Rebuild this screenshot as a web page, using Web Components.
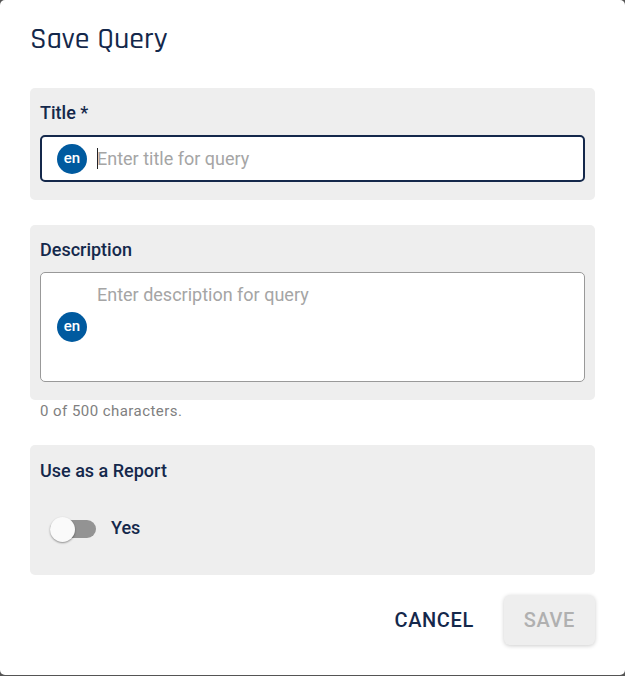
<!DOCTYPE html>
<html lang="en">
<head>
<meta charset="utf-8">
<title>Save Query</title>
<style>
  html { background: #555; }
  body { margin: 0; font-family: Roboto, "Liberation Sans", sans-serif; color: #14284b; }
</style>
</head>
<body>
<query-dialog></query-dialog>
<script>
class ShadowElement extends HTMLElement {
  constructor() {
    super();
    this.attachShadow({ mode: "open" }).innerHTML = this.template();
  }
}

customElements.define("lang-badge", class extends ShadowElement {
  template() {
    return `<style>
      :host { display: flex; align-items: center; justify-content: center; flex: none;
        width: 30px; height: 30px; border-radius: 50%; background: #005a9f; color: #fff;
        font-size: 15px; line-height: 28px; font-weight: 500; }
      span { height: 30px; }
    </style><span><slot></slot></span>`;
  }
});

customElements.define("form-section", class extends ShadowElement {
  template() {
    return `<style>
      :host { display: block; background: #eee; border-radius: 5px; padding: 10px 10px 18px; }
    </style><slot></slot>`;
  }
});

const fieldStyle = `
  :host { display: block; }
  label { display: block; font-size: 18px; line-height: 30px; font-weight: 480; margin-bottom: 7px; }
  .box { display: flex; align-items: center; box-sizing: border-box; gap: 10px;
    background: #fff; border-radius: 5px; }
  input, textarea { flex: 1; min-width: 0; box-sizing: border-box; border: 0; outline: 0; padding: 0;
    background: none; font: 380 18px/24px Roboto, "Liberation Sans", sans-serif; color: #14284b; }
  ::placeholder { color: #a5a5a5; opacity: 1; }`;

customElements.define("title-field", class extends ShadowElement {
  template() {
    return `<style>${fieldStyle}
      .box { height: 47px; padding: 0 15px; border: 2px solid #14284b; }
      input { height: 24px; }
      /* steady text cursor while the field is empty */
      input:placeholder-shown { caret-color: transparent;
        background: linear-gradient(#222, #222) 0 50% / 1px 21px no-repeat; }
    </style>
    <label for="title">Title *</label>
    <div class="box"><lang-badge>en</lang-badge><input id="title" type="text" required autofocus placeholder="Enter title for query"></div>`;
  }
  connectedCallback() { this.shadowRoot.querySelector("input").focus(); }
});

customElements.define("description-field", class extends ShadowElement {
  template() {
    return `<style>${fieldStyle}
      .box { height: 110px; padding: 0 16px; border: 1px solid #999; }
      textarea { height: 88px; resize: none; display: block; }
    </style>
    <label for="description">Description</label>
    <div class="box"><lang-badge>en</lang-badge><textarea id="description" maxlength="500" placeholder="Enter description for query"></textarea></div>`;
  }
});

customElements.define("report-switch", class extends ShadowElement {
  template() {
    return `<style>
      :host { display: block; font-size: 18px; font-weight: 480; }
      h2 { margin: 0; font: inherit; line-height: 32px; }
      label { display: flex; align-items: center; gap: 15px; padding: 28px 0 14px 10px; line-height: 26px; }
      span { padding-bottom: 2px; }
      input { appearance: none; margin: 0; width: 46px; height: 18px; border-radius: 9px;
        background: #939393; display: flex; align-items: center; }
      input::before { content: ""; width: 25px; height: 25px; flex: none; border-radius: 50%; background: #fafafa;
        box-shadow: 0 1px 2px #0006; }
      input:checked { background: #7faccf; justify-content: flex-end; }
    </style>
    <h2>Use as a Report</h2>
    <label><input type="checkbox" role="switch"><span>Yes</span></label>`;
  }
});

customElements.define("dialog-actions", class extends ShadowElement {
  template() {
    return `<style>
      :host { display: flex; justify-content: flex-end; gap: 10px; }
      button { border: 0; border-radius: 6px; height: 50px; padding: 0 20px; background: none; color: #14284b;
        font: 480 20px/24px Roboto, "Liberation Sans", sans-serif; letter-spacing: 0.03em; }
      button:disabled { background: #eee; color: #b0b0b0; box-shadow: 0 1px 4px #0003; }
    </style>
    <button type="button">CANCEL</button><button type="submit" disabled>SAVE</button>`;
  }
});

customElements.define("query-dialog", class extends ShadowElement {
  template() {
    return `<style>
      :host { display: block; box-sizing: border-box; min-height: calc(100vh - 1px); background: #fff;
        border-radius: 5px; padding: 20px 30px 30px; }
      h1 { margin: 0 0 30px; font: 500 30px/38px Rajdhani, Roboto, sans-serif; }
      .described { margin-top: 25px; }
      p { margin: 0 0 23px; padding: 0 10px; font-size: 15px; line-height: 22px; color: #808080; letter-spacing: 0.03em; }
      dialog-actions { margin-top: 20px; }
    </style>
    <form>
      <h1>Save Query</h1>
      <form-section><title-field></title-field></form-section>
      <form-section class="described"><description-field></description-field></form-section>
      <p>0 of 500 characters.</p>
      <form-section><report-switch></report-switch></form-section>
      <dialog-actions></dialog-actions>
    </form>`;
  }
});
</script>
</body>
</html>
